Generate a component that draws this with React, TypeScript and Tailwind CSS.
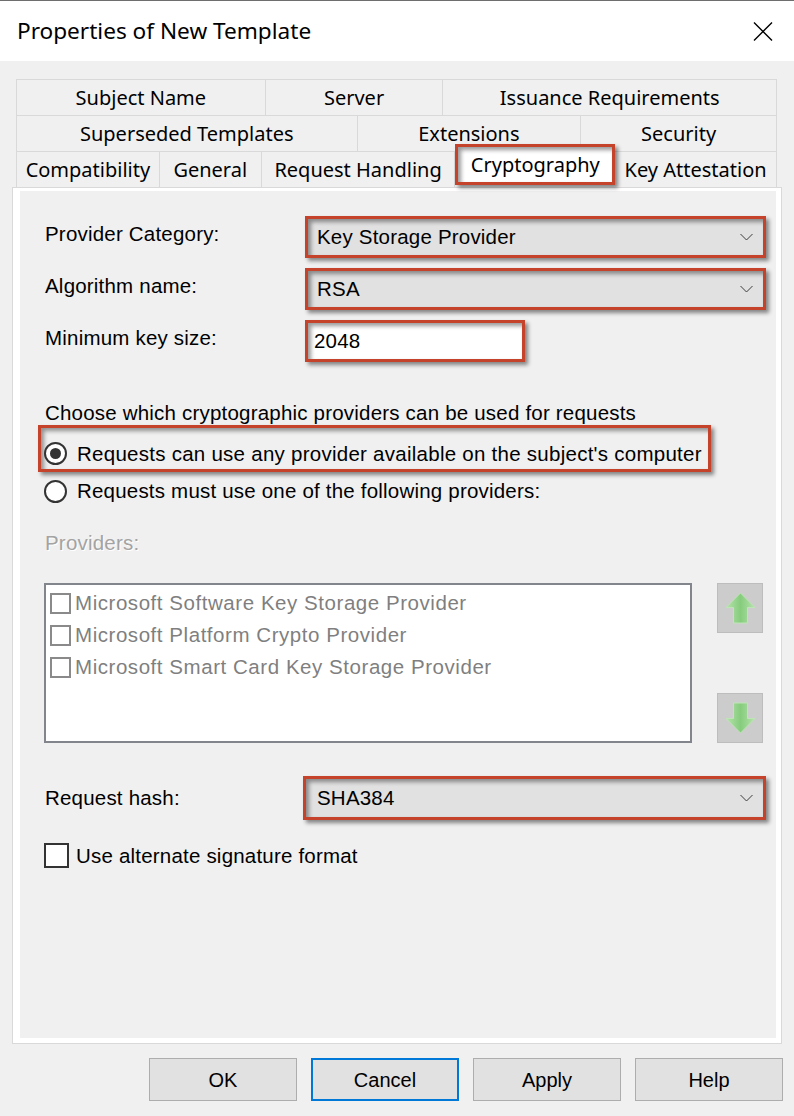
import React from "react";

// red call-out frame with the drop shadow seen in the screenshot
const RED =
  "border-[3px] border-[#c5432a] shadow-[3px_3px_4px_rgba(0,0,0,0.45),inset_3px_3px_4px_rgba(0,0,0,0.4)]";

const row1 = [
  { label: "Subject Name", w: "w-[249px]" },
  { label: "Server", w: "w-[178px]" },
  { label: "Issuance Requirements", w: "w-[334px]" },
];
const row2 = [
  { label: "Superseded Templates", w: "w-[341px]" },
  { label: "Extensions", w: "w-[224px]" },
  { label: "Security", w: "w-[196px]" },
];
const row3 = [
  { label: "Compatibility", w: "w-[143px]" },
  { label: "General", w: "w-[102px]" },
  { label: "Request Handling", w: "w-[194px]" },
  { label: "Cryptography", w: "w-[160px]", active: true },
  { label: "Key Attestation", w: "w-[162px]" },
];

const providers = [
  "Microsoft Software Key Storage Provider",
  "Microsoft Platform Crypto Provider",
  "Microsoft Smart Card Key Storage Provider",
];

const Chevron = () => (
  <svg width="13" height="8" viewBox="0 0 13 8" fill="none">
    <path d="M0.5 1 L6.5 7 L12.5 1" stroke="#3c3c3c" strokeWidth="1" />
  </svg>
);

const Arrow = ({ down }: { down?: boolean }) => (
  <svg width="31" height="32" viewBox="0 0 31 32" className={down ? "rotate-180" : ""}>
    <defs>
      <linearGradient id={down ? "gd" : "gu"} x1="0" y1="0" x2="1" y2="0">
        <stop offset="0" stopColor="#b6e3ac" />
        <stop offset="0.5" stopColor="#86cc7d" />
        <stop offset="1" stopColor="#b6e3ac" />
      </linearGradient>
    </defs>
    <path
      d="M15.5 1 L30 15.5 L22.5 15.5 L22.5 31 L8.5 31 L8.5 15.5 L1 15.5 Z"
      fill={`url(#${down ? "gd" : "gu"})`}
      stroke="#bfe4b7"
      strokeWidth="1"
    />
  </svg>
);

function TabRow({ tabs }: { tabs: { label: string; w: string; active?: boolean }[] }) {
  return (
    <div className="flex h-[36px] border-t border-l border-[#d9d9d9]">
      {tabs.map((t) =>
        t.active ? (
          <div
            key={t.label}
            className={`${t.w} ${RED} relative z-10 -mt-[8px] h-[41px] bg-white flex items-center justify-center`}
          >
            {t.label}
          </div>
        ) : (
          <div
            key={t.label}
            className={`${t.w} flex items-center justify-center border-r border-[#d9d9d9] pt-[1px]`}
          >
            {t.label}
          </div>
        )
      )}
    </div>
  );
}

export default function App() {
  return (
    <div className="w-[794px] h-[1116px] bg-[#f0f0f0] border-t border-[#6e6e6e] flex flex-col overflow-hidden text-black font-['Liberation_Sans',Arial,sans-serif]">
      {/* title bar */}
      <div className="h-[60px] shrink-0 bg-white flex items-center justify-between pl-[17px] pr-[21px]">
        <span className="font-['Noto_Sans',sans-serif] text-[22.6px] leading-none">Properties of New Template</span>
        <svg width="20" height="19" viewBox="0 0 20 19">
          <path d="M1 0.5 L19 18.5 M19 0.5 L1 18.5" stroke="#000" strokeWidth="1.4" />
        </svg>
      </div>

      <div className="px-[12px] pt-[18px]">
        {/* tabs */}
        <div className="ml-[4px] w-[761px] font-['Noto_Sans',sans-serif] text-[20px]">
          <TabRow tabs={row1} />
          <TabRow tabs={row2} />
          <TabRow tabs={row3} />
        </div>

        {/* panel */}
        <div className="w-[770px] h-[857px] border border-[#d9d9d9] bg-white pl-[7px] pt-[3px] pr-[5px] pb-[5px]">
          <div className="h-full bg-[#f0f0f0] pt-[25px] text-[20.5px] leading-[24px] tracking-[0.2px]">
            <div className="flex items-start">
              <div className="w-[285px] pl-[25px] pt-[6px]">Provider Category:</div>
              <div className={`w-[461px] h-[42px] ${RED} bg-[#e1e1e1] flex items-center justify-between pl-[9px] pr-[10px]`}>
                <span>Key Storage Provider</span>
                <Chevron />
              </div>
            </div>
            <div className="flex items-start mt-[10px]">
              <div className="w-[285px] pl-[25px] pt-[6px]">Algorithm name:</div>
              <div className={`w-[461px] h-[42px] ${RED} bg-[#e1e1e1] flex items-center justify-between pl-[9px] pr-[10px]`}>
                <span>RSA</span>
                <Chevron />
              </div>
            </div>
            <div className="flex items-start mt-[10px]">
              <div className="w-[285px] pl-[25px] pt-[6px]">Minimum key size:</div>
              <div className={`w-[220px] h-[42px] ${RED} bg-white flex items-center pl-[6px]`}>2048</div>
            </div>

            <div className="mt-[39px] pl-[25px]">Choose which cryptographic providers can be used for requests</div>

            <div className={`ml-[18px] w-[673px] h-[47px] ${RED} flex items-center gap-[10px] pt-[10px] pl-[3px] tracking-[0.26px]`}>
              <div className="w-[23px] h-[23px] rounded-full border-2 border-[#333] bg-white flex items-center justify-center">
                <div className="w-[11px] h-[11px] rounded-full bg-[#333]" />
              </div>
              <span>Requests can use any provider available on the subject's computer</span>
            </div>

            <div className="ml-[24px] mt-[7px] flex items-center gap-[10px]">
              <div className="w-[23px] h-[23px] rounded-full border-2 border-[#333] bg-white" />
              <span>Requests must use one of the following providers:</span>
            </div>

            <div className="mt-[28px] pl-[25px] text-[#a3a3a3] [text-shadow:1px_1px_0_#ffffff]">Providers:</div>

            <div className="mt-[28px] flex">
              <div className="ml-[24px] w-[648px] h-[160px] border-2 border-[#82868c] bg-white pt-[2px] pl-[4px] tracking-[0.55px]">
                {providers.map((p) => (
                  <div key={p} className="h-[32px] flex items-center gap-[4px] text-[#7f7f7f]">
                    <div className="w-[21px] h-[21px] border-2 border-[#8a8a8a] bg-white" />
                    <span>{p}</span>
                  </div>
                ))}
              </div>
              <div className="ml-[25px] h-[160px] flex flex-col justify-between">
                <div className="w-[46px] h-[50px] bg-[#cccccc] border border-[#bdbdbd] flex items-center justify-center">
                  <Arrow />
                </div>
                <div className="w-[46px] h-[50px] bg-[#cccccc] border border-[#bdbdbd] flex items-center justify-center">
                  <Arrow down />
                </div>
              </div>
            </div>

            <div className="flex items-start mt-[33px]">
              <div className="w-[283px] pl-[25px] pt-[10px]">Request hash:</div>
              <div className={`w-[463px] h-[44px] ${RED} bg-[#e1e1e1] flex items-center justify-between pl-[11px] pr-[10px]`}>
                <span>SHA384</span>
                <Chevron />
              </div>
            </div>

            <div className="ml-[24px] mt-[23px] flex items-center gap-[7px]">
              <div className="w-[25px] h-[25px] border-2 border-[#333] bg-white" />
              <span>Use alternate signature format</span>
            </div>
          </div>
        </div>
      </div>

      {/* dialog buttons */}
      <div className="mt-[14px] flex justify-end gap-[14px] pr-[11px] text-[20px]">
        <button className="w-[148px] h-[43px] bg-[#e1e1e1] border border-[#adadad]">OK</button>
        <button className="w-[148px] h-[43px] bg-[#e1e1e1] border-2 border-[#0078d7]">Cancel</button>
        <button className="w-[148px] h-[43px] bg-[#e1e1e1] border border-[#adadad]">Apply</button>
        <button className="w-[148px] h-[43px] bg-[#e1e1e1] border border-[#adadad]">Help</button>
      </div>
    </div>
  );
}
